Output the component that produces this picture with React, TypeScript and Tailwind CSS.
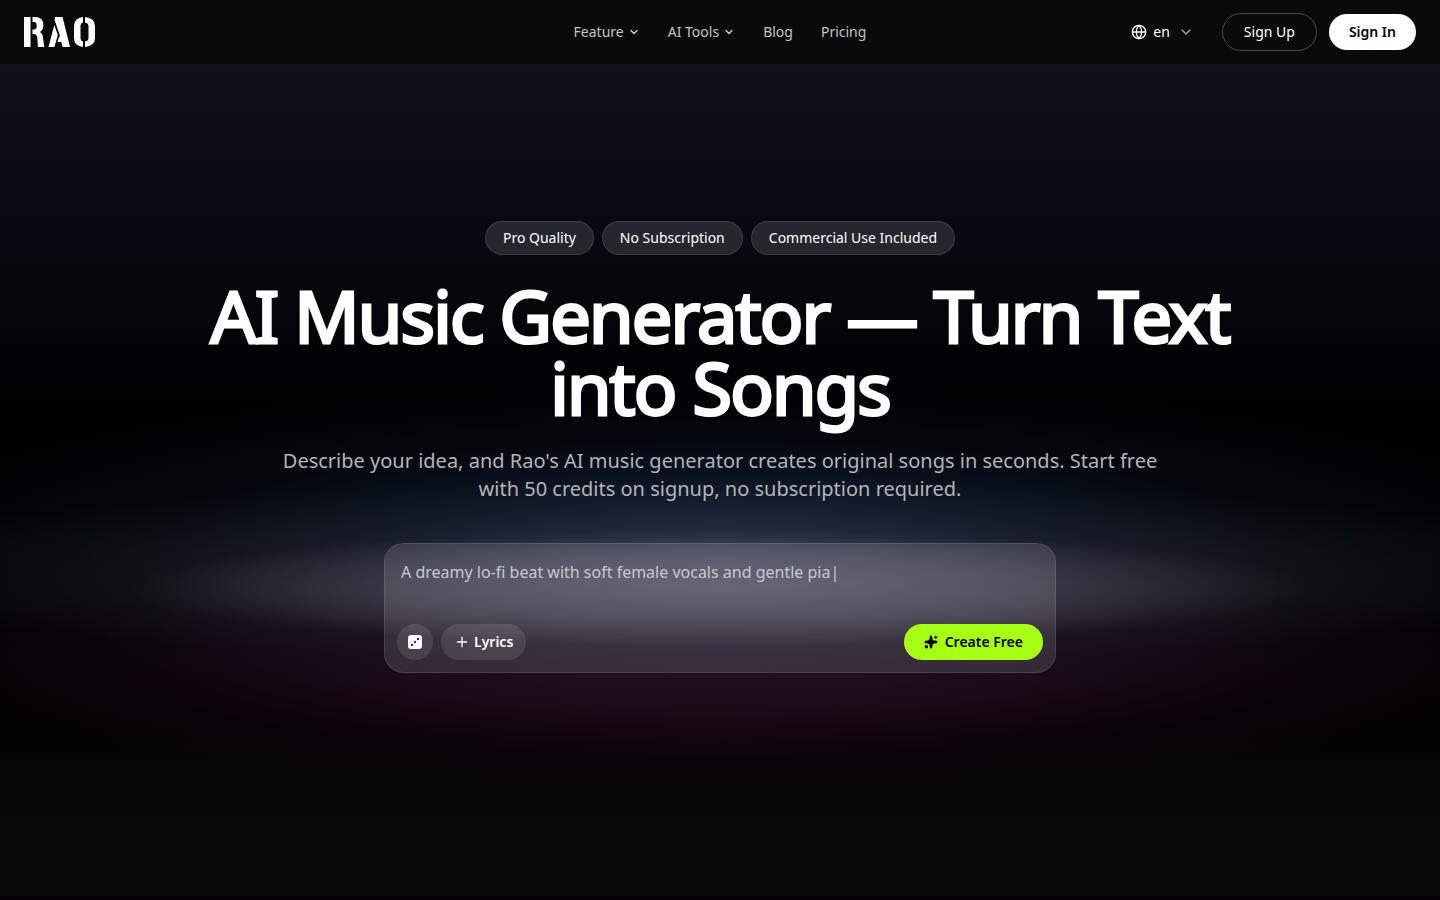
import { ChevronDown, Globe, Plus, Sparkles } from "lucide-react";

const navLinks = [
  { label: "Feature", menu: true },
  { label: "AI Tools", menu: true },
  { label: "Blog", menu: false },
  { label: "Pricing", menu: false },
];

const badges = ["Pro Quality", "No Subscription", "Commercial Use Included"];

function Logo() {
  return (
    <svg width="72" height="30" viewBox="0 0 72 30" fill="#fff" role="img" aria-label="RAO">
      <path d="M0 0H6.5V30H0Z" />
      <path d="M8.5 0H11Q19.3 0 19.3 8Q19.3 13 16 15Q19 17 19 21L20.3 30H14L13.3 21Q13.3 17.5 10 17H8.5V12.5H10Q12.7 12.5 12.7 9Q12.7 5 10 5H8.5Z" />
      <path d="M24.5 30L30.3 8L33.8 18L30.4 30Z" />
      <path d="M31 0H38.5L46 30H38.6L37.3 25H33.5L35.2 19.5H36.2L30.6 3Z" />
      <path d="M59 0V5.5Q56.5 6 56.5 9V21Q56.5 24 59 24.5V30Q50 29 50 21V9Q50 1 59 0Z" />
      <path d="M61 0Q71 1 71 9V21Q71 29 61 30V24.5Q64.5 24 64.5 21V9Q64.5 6 61 5.5Z" />
    </svg>
  );
}

function DiceIcon() {
  return (
    <svg width="16" height="16" viewBox="0 0 16 16" aria-hidden="true">
      <rect x="1" y="1" width="14" height="14" rx="3" fill="#fff" />
      <g fill="#3b333b">
        <circle cx="11" cy="5" r="1.2" />
        <circle cx="8" cy="8" r="1.2" />
        <circle cx="5" cy="11" r="1.2" />
      </g>
    </svg>
  );
}

function Header() {
  return (
    <header className="grid h-16 grid-cols-[1fr_auto_1fr] items-center bg-[#0a0a0a] px-6 text-sm">
      <a href="#" className="justify-self-start">
        <Logo />
      </a>
      <nav className="flex items-center gap-7 text-[#c4c4c4]">
        {navLinks.map((link) =>
          link.menu ? (
            <button key={link.label} type="button" className="flex items-center gap-1">
              {link.label}
              <ChevronDown size={12} strokeWidth={3} />
            </button>
          ) : (
            <a key={link.label} href="#">
              {link.label}
            </a>
          ),
        )}
      </nav>
      <div className="flex items-center gap-3 justify-self-end">
        <button type="button" className="mr-4 flex items-center gap-1.5 text-white">
          <Globe size={16} />
          en
          <ChevronDown size={16} className="ml-0.5 text-[#a3a3a3]" />
        </button>
        <button
          type="button"
          className="rounded-full border border-[#4b4b4b] px-[21px] py-2 text-white"
        >
          Sign Up
        </button>
        <button type="button" className="rounded-full bg-white px-5 py-2 font-semibold text-black">
          Sign In
        </button>
      </div>
    </header>
  );
}

function PromptCard() {
  return (
    <form className="mt-10 w-full max-w-2xl rounded-[20px] border border-white/10 bg-white/12 p-3 text-left">
      <textarea
        aria-label="Describe your song"
        placeholder="A dreamy lo-fi beat with soft female vocals and gentle pia|"
        className="block h-15 w-full resize-none bg-transparent p-1 text-base text-white outline-none placeholder:text-[#c8c8cf]"
      />
      <div className="mt-2 flex items-center gap-2 text-sm font-semibold">
        <button
          type="button"
          aria-label="Random prompt"
          className="flex size-9 items-center justify-center rounded-full bg-white/10"
        >
          <DiceIcon />
        </button>
        <button
          type="button"
          className="flex h-9 items-center gap-1 rounded-full bg-white/10 px-[13px] text-white"
        >
          <Plus size={16} />
          Lyrics
        </button>
        <button
          type="button"
          className="ml-auto flex h-9 items-center gap-[7px] rounded-full bg-[#a8ff16] px-5 text-black"
        >
          <Sparkles size={14} fill="currentColor" />
          Create Free
        </button>
      </div>
    </form>
  );
}

export default function App() {
  return (
    <div className="min-h-screen bg-[#050205] font-['Noto_Sans',sans-serif] text-white">
      <Header />
      <main className="flex min-h-[calc(100vh-68px)] flex-col items-center justify-center bg-[radial-gradient(41%_7%_at_50%_63%,rgba(140,134,144,0.42)_0%,rgba(122,116,130,0.32)_50%,rgba(95,92,102,0.18)_80%,transparent_100%),radial-gradient(64%_11%_at_50%_61%,rgba(70,71,80,0.34)_0%,rgba(50,51,57,0.3)_45%,rgba(34,36,38,0.22)_75%,transparent_100%),radial-gradient(60%_20%_at_50%_58%,rgba(36,62,100,0.7)_0%,rgba(20,38,66,0.5)_40%,rgba(12,24,42,0.32)_65%,transparent_100%),radial-gradient(60%_18%_at_50%_70%,rgba(76,26,64,0.55)_0%,rgba(58,18,48,0.45)_45%,rgba(30,8,24,0.25)_75%,transparent_100%),linear-gradient(180deg,#11111e_0%,#090912_20%,#000_42%,#020202_80%,#0a0a0a_93%)] px-6 pb-[66px] text-center">
        <ul className="flex flex-wrap justify-center gap-2 text-sm">
          {badges.map((badge) => (
            <li
              key={badge}
              className="rounded-full border border-white/10 bg-white/12 px-[17px] py-1.5"
            >
              {badge}
            </li>
          ))}
        </ul>
        <h1 className="mt-6 max-w-6xl text-7xl leading-18 font-normal tracking-tight [-webkit-text-stroke:3px_white]">
          AI Music Generator — Turn Text into Songs
        </h1>
        <p className="mt-6 max-w-4xl text-xl text-[#b4b4b8]">
          Describe your idea, and Rao's AI music generator creates original songs in seconds. Start
          free with 50 credits on signup, no subscription required.
        </p>
        <PromptCard />
      </main>
    </div>
  );
}
